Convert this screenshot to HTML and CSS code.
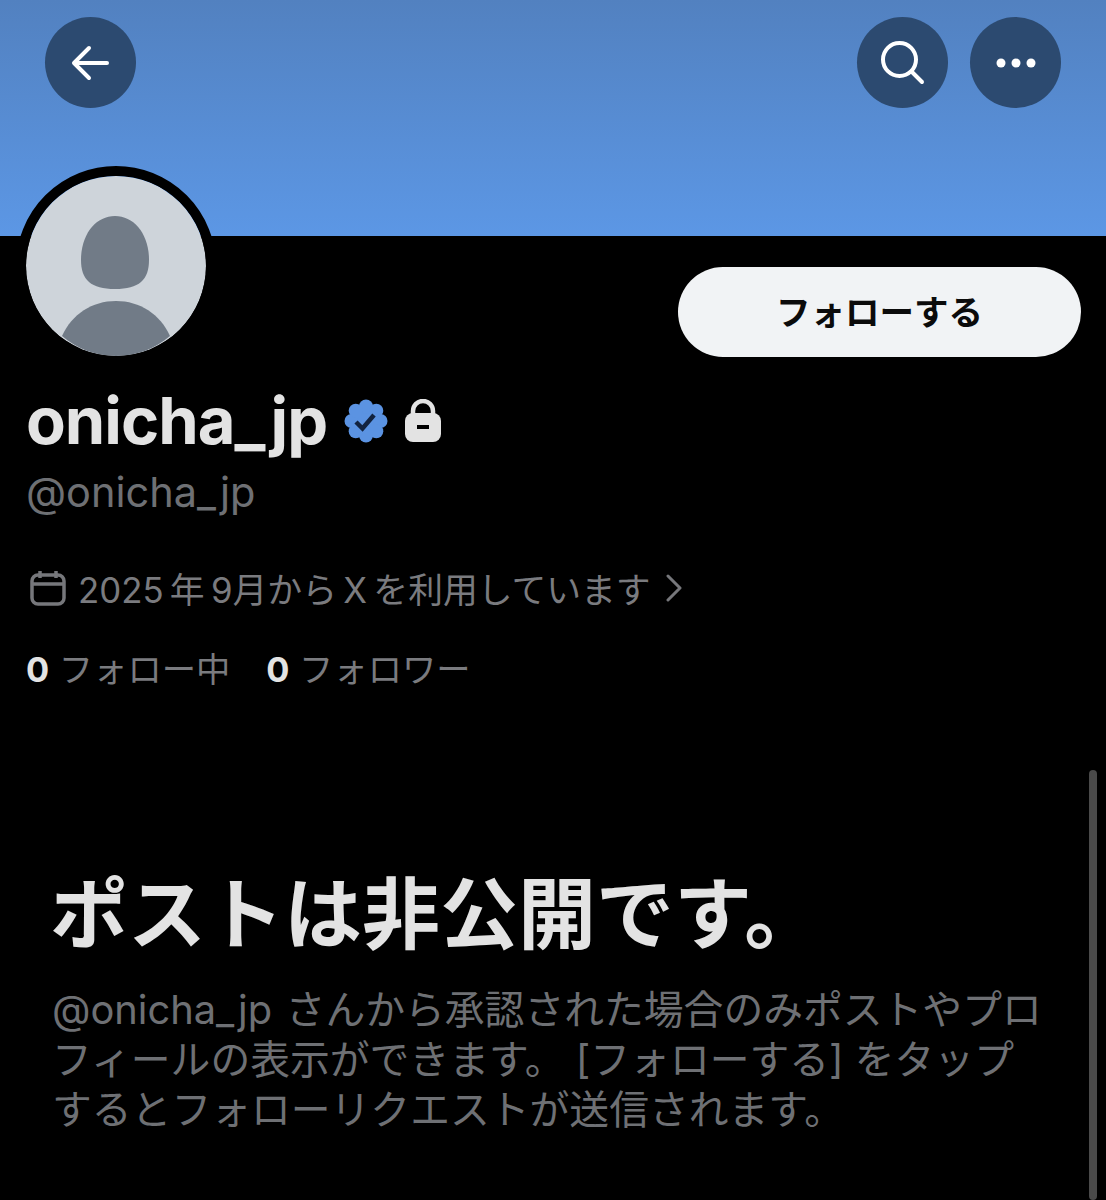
FILE: index.html
```html
<!DOCTYPE html>
<html lang="ja">
<head>
    <meta charset="UTF-8">
    <meta name="viewport" content="width=device-width, initial-scale=1.0">
    <title>onicha_jp</title>
    <link rel="stylesheet" href="styles.css">
</head>
<body>
    <header class="banner">
        <button class="round-btn" aria-label="back">
            <svg width="40" height="40" viewBox="0 0 40 40" fill="none" stroke="#fff" stroke-width="4" stroke-linecap="round" stroke-linejoin="round"><path d="M36 20H5"/><path d="M18 5 3 20l15 15"/></svg>
        </button>
        <div class="banner-right">
            <button class="round-btn" aria-label="search">
                <svg width="44" height="44" viewBox="0 0 44 44" fill="none" stroke="#fff" stroke-width="4" stroke-linecap="round"><circle cx="18.500" cy="18.500" r="16.500"/><path d="M30.500 30.500l10.500 10.500"/></svg>
            </button>
            <button class="round-btn" aria-label="more">
                <svg width="40" height="10" viewBox="0 0 40 10" fill="#fff"><circle cx="5" cy="5" r="4.500"/><circle cx="20" cy="5" r="4.500"/><circle cx="35" cy="5" r="4.500"/></svg>
            </button>
        </div>
    </header>

    <main class="profile">
        <div class="avatar-row">
            <div class="avatar">
                <svg width="180" height="180" viewBox="0 0 180 180"><circle cx="90" cy="90" r="90" fill="#ced4da"/><path d="M89 40c-19 0-34 18-34 44 0 20 10 29 34 29s34-9 34-29c0-26-15-44-34-44z" fill="#717b87"/><path d="M36 160c10-22 30-35 54-35s44 13 54 35c-15 13-34 20-54 20s-39-7-54-20z" fill="#717b87"/></svg>
            </div>
            <button class="follow-btn">フォローする</button>
        </div>

        <div class="name-row">
            <h1 class="name">onicha_jp</h1>
            <svg class="badge" width="44" height="44" viewBox="0 0 44 44">
                <g fill="#5b93e2">
                    <circle cx="22" cy="22" r="16"/>
                    <circle cx="22" cy="7.500" r="7"/>
                    <circle cx="32.300" cy="11.700" r="7"/>
                    <circle cx="36.500" cy="22" r="7"/>
                    <circle cx="32.300" cy="32.300" r="7"/>
                    <circle cx="22" cy="36.500" r="7"/>
                    <circle cx="11.700" cy="32.300" r="7"/>
                    <circle cx="7.500" cy="22" r="7"/>
                    <circle cx="11.700" cy="11.700" r="7"/>
                </g>
                <path d="M12 23l6.500 6.500L30 16" fill="none" stroke="#12233f" stroke-width="4.500"/>
            </svg>
            <svg class="lock" width="38" height="44" viewBox="0 0 38 44"><path d="M9 18V12a10 10 0 0 1 20 0v6" fill="none" stroke="#e3e3e3" stroke-width="4.500"/><rect x="1" y="14" width="36" height="29" rx="8" fill="#e3e3e3"/><rect x="13" y="26" width="12" height="4" fill="#000"/></svg>
        </div>
        <p class="handle">@onicha_jp</p>

        <div class="joined">
            <svg width="36" height="36" viewBox="0 0 36 36" fill="none" stroke="#76777b" stroke-width="3.500"><rect x="2" y="5" width="32" height="29" rx="6"/><path d="M2 14h32M10 1v7M26 1v7"/></svg>
            <span>2025&#8201;年&#8201;9月から&#8201;X&#8201;を利用しています</span>
            <svg class="chevron" width="16" height="28" viewBox="0 0 16 28" fill="none" stroke="#76777b" stroke-width="3" stroke-linecap="round" stroke-linejoin="round"><path d="M2 2l12 12L2 26"/></svg>
        </div>

        <div class="counts">
            <span><b>0</b> フォロー中</span>
            <span><b>0</b> フォロワー</span>
        </div>

        <section class="private">
            <h2>ポストは非公開です。</h2>
            <p>@onicha_jp&#8197;&#8202;さんから承認された場合のみポストやプロフィールの表示ができます。 [フォローする] をタップするとフォローリクエストが送信されます。</p>
        </section>
    </main>

    <div class="scrollbar"></div>
</body>
</html>
```

FILE: styles.css
```css
html, body {
    margin: 0;
    padding: 0;
}

body {
    width: 1106px;
    height: 1200px;
    overflow: hidden;
    position: relative;
    background-color: #000;
    color: #e3e3e3;
    font-family: "Inter", "Noto Sans CJK JP", sans-serif;
}

button {
    border: none;
    padding: 0;
    font-family: inherit;
    cursor: pointer;
}

.banner {
    height: 236px;
    box-sizing: border-box;
    padding: 17px 45px 0 45px;
    display: flex;
    justify-content: space-between;
    align-items: flex-start;
    background: linear-gradient(#5281c0, #5c97e5);
}

.banner-right {
    display: flex;
    gap: 22px;
}

.round-btn {
    width: 91px;
    height: 91px;
    border-radius: 50%;
    background-color: #2c4a70;
    display: flex;
    align-items: center;
    justify-content: center;
}

.profile {
    padding: 0 25px 0 26px;
}

.avatar-row {
    display: flex;
    justify-content: space-between;
    align-items: flex-start;
    height: 128px;
}

.avatar {
    width: 180px;
    height: 180px;
    margin-top: -70px;
    border-radius: 50%;
    border: 10px solid #000;
    margin-left: -10px;
    overflow: hidden;
    flex-shrink: 0;
}

.avatar svg {
    display: block;
}

.follow-btn {
    width: 403px;
    height: 90px;
    margin-top: 31px;
    padding-bottom: 4px;
    border-radius: 45px;
    background-color: #f1f3f5;
    color: #0b0b0b;
    font-size: 34.500px;
    font-weight: 700;
}

.name-row {
    display: flex;
    align-items: center;
    height: 76px;
    margin-top: 19px;
}

.name {
    margin: 0 17px 0 0;
    font-size: 65px;
    line-height: 76px;
    font-weight: 700;
    letter-spacing: -1px;
}

.lock {
    margin-left: 16px;
}

.handle {
    margin: 3px 0 0;
    color: #6e7074;
    font-size: 41.500px;
    line-height: 60px;
}

.joined {
    display: flex;
    align-items: center;
    gap: 12px;
    margin-top: 36px;
    height: 60px;
    padding-left: 4px;
    color: #7a7b7f;
    font-size: 34.800px;
}

.chevron {
    margin-left: 3px;
}

.counts {
    display: flex;
    gap: 36px;
    margin-top: 22px;
    color: #7a7b7f;
    font-size: 34.300px;
    line-height: 60px;
}

.counts b {
    color: #e3e3e3;
    font-weight: 700;
}

.private {
    margin-top: 170px;
    padding: 0 26px;
    width: 1048px;
    box-sizing: border-box;
}

.private h2 {
    margin: 0 0 0 -2px;
    font-size: 78px;
    line-height: 90px;
    font-weight: 700;
}

.private p {
    margin: 25px 0 0;
    color: #6e7074;
    font-size: 39.800px;
    line-height: 50px;
}

.scrollbar {
    position: absolute;
    right: 9px;
    top: 770px;
    width: 8px;
    height: 430px;
    border-radius: 4px;
    background-color: #4a4a4a;
}
```
